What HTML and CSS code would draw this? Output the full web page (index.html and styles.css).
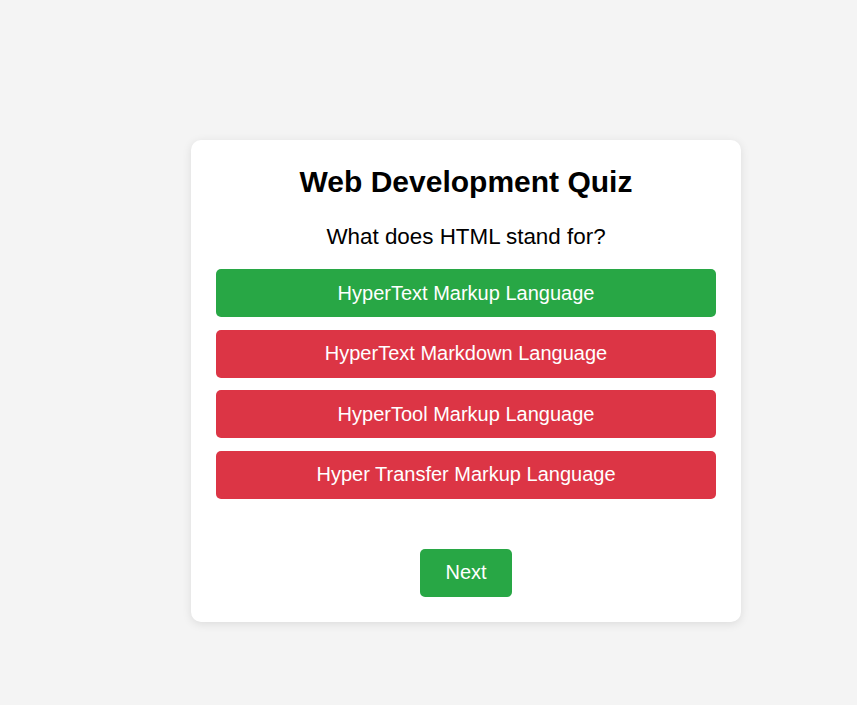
FILE: index.html
```html
<!DOCTYPE html>
<html>
<head>
<meta charset="utf-8">
<link rel="stylesheet" href="styles.css">
</head>
<body>
<div class="page">
  <div class="quiz">
    <h1 class="title">Web Development Quiz</h1>
    <p class="question">What does HTML stand for?</p>
    <div class="options">
      <button class="opt correct">HyperText Markup Language</button>
      <button class="opt wrong">HyperText Markdown Language</button>
      <button class="opt wrong">HyperTool Markup Language</button>
      <button class="opt wrong">Hyper Transfer Markup Language</button>
    </div>
    <button class="next">Next</button>
  </div>
</div>
</body>
</html>
```

FILE: styles.css
```css
html, body {
  margin: 0;
  padding: 0;
  background: #f4f4f4;
  font-family: Arial, "Liberation Sans", sans-serif;
}
.page {
  height: 705px;
  box-sizing: border-box;
  padding: 140px 0 0 191px;
  display: flex;
  align-items: flex-start;
}
.quiz {
  width: 500px;
  padding: 20px 25px 25px;
  background: #fff;
  border-radius: 10px;
  box-shadow: 0 2px 10px rgba(0,0,0,0.1);
  text-align: center;
  display: flex;
  flex-direction: column;
  align-items: center;
}
.title {
  margin: 0;
  font-size: 30px;
  line-height: 44px;
  color: #000;
}
.question {
  margin: 20px 0 20px;
  font-size: 22.4px;
  line-height: 25px;
  color: #000;
}
.options {
  width: 100%;
  display: flex;
  flex-direction: column;
  gap: 12.67px;
}
.opt {
  width: 100%;
  height: 48px;
  border: none;
  border-radius: 5px;
  color: #fff;
  font-family: Arial, "Liberation Sans", sans-serif;
  font-size: 20px;
  padding: 0;
}
.correct { background: #28a745; }
.wrong { background: #dc3545; }
.next {
  margin-top: 50px;
  width: 92px;
  height: 48px;
  border: none;
  border-radius: 5px;
  background: #28a745;
  color: #fff;
  font-family: Arial, "Liberation Sans", sans-serif;
  font-size: 20px;
  padding: 0;
}
```
